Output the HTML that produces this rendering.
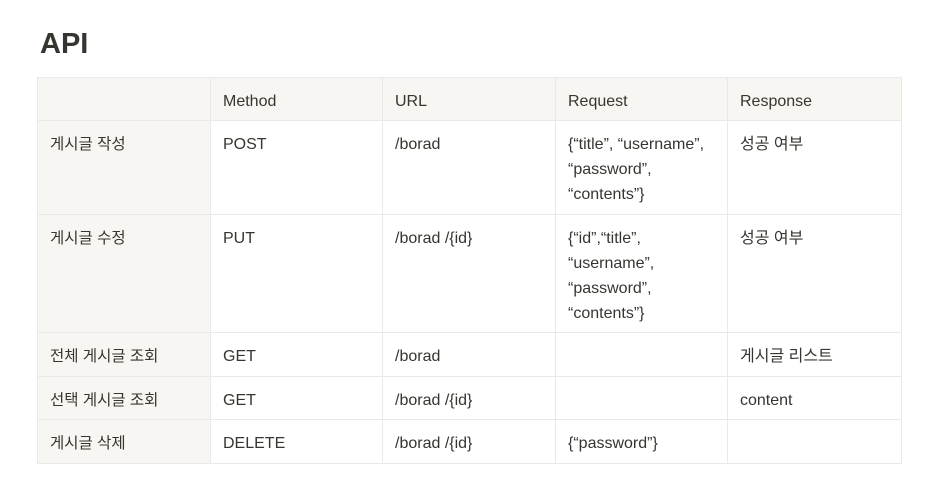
<!DOCTYPE html>
<html><head><meta charset="utf-8"><style>
body{margin:0;background:#fff;width:932px;height:504px;overflow:hidden;font-family:"Liberation Sans","Noto Sans CJK KR",sans-serif;color:#37352f;}
h1{position:absolute;left:40px;top:25px;margin:0;font-size:29px;font-weight:600;line-height:38px;}
table{position:absolute;left:37px;top:76.5px;border-collapse:collapse;table-layout:fixed;width:864px;font-size:16px;}
td{border:1px solid #e9e9e7;padding:11px 12px 6.5px;line-height:25px;vertical-align:top;}
tr:first-child td{background:#f7f6f3;font-weight:500;}
td:first-child{background:#f7f6f3;font-size:15.5px;}
</style></head><body>
<h1>API</h1>
<table>
<colgroup><col style="width:173px"><col style="width:172px"><col style="width:173px"><col style="width:172px"><col style="width:174px"></colgroup>
<tr><td></td><td>Method</td><td>URL</td><td>Request</td><td>Response</td></tr>
<tr><td>게시글 작성</td><td>POST</td><td>/borad</td><td>{“title”, “username”, “password”, “contents”}</td><td>성공 여부</td></tr>
<tr><td>게시글 수정</td><td>PUT</td><td>/borad /{id}</td><td>{“id”,“title”, “username”, “password”, “contents”}</td><td>성공 여부</td></tr>
<tr><td>전체 게시글 조회</td><td>GET</td><td>/borad</td><td></td><td>게시글 리스트</td></tr>
<tr><td>선택 게시글 조회</td><td>GET</td><td>/borad /{id}</td><td></td><td>content</td></tr>
<tr><td>게시글 삭제</td><td>DELETE</td><td>/borad /{id}</td><td>{“password”}</td><td></td></tr>
</table>
</body></html>
